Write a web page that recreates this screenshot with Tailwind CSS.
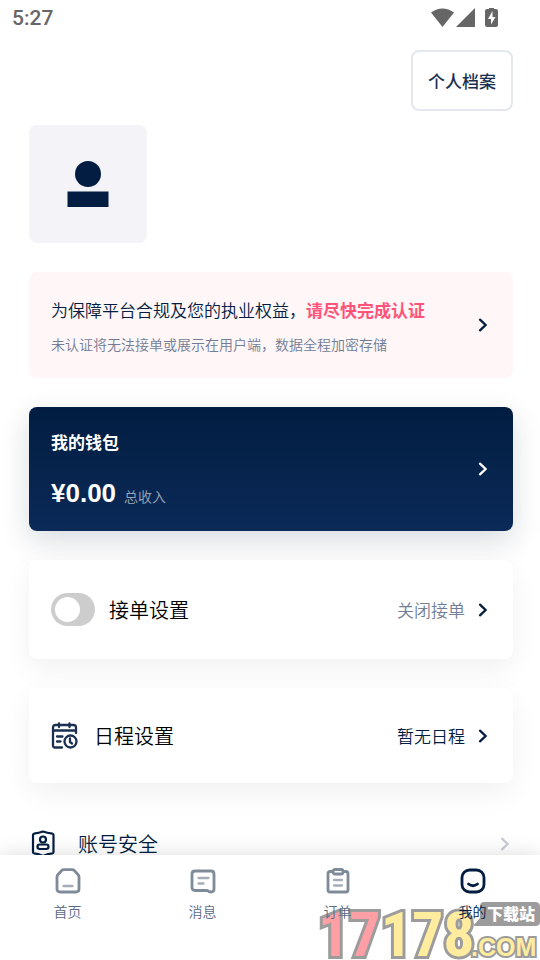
<!DOCTYPE html>
<html lang="zh-CN">
<head>
<meta charset="utf-8">
<meta name="viewport" content="width=device-width, initial-scale=1">
<title>我的</title>
<script src="https://cdn.jsdelivr.net/npm/@tailwindcss/browser@4"></script>
</head>
<body class="flex h-screen flex-col overflow-hidden bg-white font-['Noto_Sans_CJK_SC',sans-serif] font-[350] text-[#021d41]">
  <svg class="hidden" aria-hidden="true">
    <symbol id="chevron" viewBox="0 0 16 16"><path d="M5 2.700 10.600 8 5 13.300" fill="none" stroke="currentColor" stroke-width="2.300" stroke-linecap="round" stroke-linejoin="miter"/></symbol>
  </svg>

  <header class="flex h-9 shrink-0 items-center justify-between pr-[41px] pl-3 text-[#666]">
    <span class="font-[Roboto,sans-serif] text-[21px] leading-9 font-medium">5:27</span>
    <svg class="h-5 w-[68px]" viewBox="0 0 68 20" fill="currentColor" aria-label="WLAN、信号、充电中">
      <path d="M0 4.500Q11.500-3.500 23 4.500L11.500 19Z"/>
      <path d="M44 0V19H25Z"/>
      <path d="M58-1h5v2h2q2 0 2 2v14q0 2-2 2h-9q-2 0-2-2V3q0-2 2-2h2Z"/>
      <path d="M61.500 3 57 11h3v5.500L64.500 9h-3Z" fill="#fff"/>
    </svg>
  </header>

  <main class="min-h-0 flex-1 overflow-hidden pt-[14px] pr-[27px] pl-[29px]">
    <div class="flex justify-end">
      <button class="rounded-lg border-2 border-[#e4e7ed] px-[15px] py-[15px] text-[17px] leading-[27px] font-medium text-[#1a3050]">个人档案</button>
    </div>

    <div class="mt-[14px] flex size-[118px] items-center justify-center rounded-lg bg-[#f3f3f8]">
      <svg class="h-[46px] w-[42px]" viewBox="0 0 42 46" fill="#021d41" role="img" aria-label="头像"><circle cx="21" cy="13" r="13"/><path d="M.5 30.500h41V46H.5Z"/></svg>
    </div>

    <a href="#verify" class="mt-[29px] flex items-center justify-between rounded-lg bg-[#fff6f7] px-[22px] py-6">
      <span>
        <span class="block text-[17px] leading-7">为保障平台合规及您的执业权益，<strong class="font-bold text-[#ff5479]">请尽快完成认证</strong></span>
        <span class="mt-[10px] block text-sm text-[#717d95]">未认证将无法接单或展示在用户端，数据全程加密存储</span>
      </span>
      <svg class="size-4"><use href="#chevron"/></svg>
    </a>

    <a href="#wallet" class="mt-[29px] flex items-center justify-between rounded-lg bg-linear-to-b from-[#021d41] to-[#0c2a58] px-[22px] py-[22px] text-white shadow-[0_10px_30px_rgba(2,29,65,0.16)]">
      <span>
        <span class="block text-[17px] leading-[26px] font-bold">我的钱包</span>
        <span class="mt-[22px] flex items-baseline gap-2">
          <strong class="font-['Liberation_Sans','Noto_Sans_CJK_SC',sans-serif] text-[26px] leading-8 font-bold">¥0.00</strong>
          <span class="text-sm leading-4 text-white/60">总收入</span>
        </span>
      </span>
      <svg class="size-4"><use href="#chevron"/></svg>
    </a>

    <section class="mt-[29px] flex items-center justify-between rounded-lg bg-white px-[22px] py-[33px] shadow-[0_10px_30px_rgba(0,0,0,0.06)]">
      <label class="flex items-center gap-[14px] text-xl leading-[33px] text-black">
        <input type="checkbox" class="relative h-[33px] w-[44px] appearance-none rounded-full bg-[#cdcdcd] before:absolute before:top-1 before:left-1 before:size-[25px] before:rounded-full before:bg-white">
        接单设置
      </label>
      <a href="#orders-setting" class="flex items-center gap-[10px] text-[17px] leading-[29px] text-[#717d95]">关闭接单<svg class="size-4 text-[#021d41]"><use href="#chevron"/></svg></a>
    </section>

    <a href="#schedule" class="mt-[29px] flex items-center justify-between rounded-lg bg-white px-[22px] py-[33px] shadow-[0_10px_30px_rgba(0,0,0,0.06)]">
      <span class="flex items-center gap-4 text-xl leading-[29px] text-black">
        <svg class="size-[27px]" viewBox="0 0 27 27" fill="none" stroke="#1a3050" stroke-width="2.300" stroke-linecap="round" stroke-linejoin="round">
          <path d="M11 25.500H4Q2 25.500 2 23.500V5.500Q2 3 4.500 3H22.500Q25 3 25 5.500V11M2 8.500H25M8 1.500V5M18.500 1.500V5M6 14.500H11.500M6 19.500H9.500"/>
          <circle cx="19.500" cy="19.500" r="6"/><path d="M19 16.500V20L21 21.500"/>
        </svg>
        日程设置
      </span>
      <span class="flex items-center gap-[10px] text-[17px] leading-[29px]">暂无日程<svg class="size-4"><use href="#chevron"/></svg></span>
    </a>

    <a href="#security" class="mt-[46px] flex items-center justify-between">
      <span class="flex items-center gap-[21px] text-xl leading-[29px]">
        <svg class="h-[27px] w-7" viewBox="0 0 28 27" fill="none" stroke="#021d41" stroke-width="2.200" stroke-linejoin="round">
          <path d="M4 5Q4 4 5 3.700Q10 3 14 1.500Q18 3 23.500 3.700Q24.500 4 24.500 5V22Q24.500 23 23.500 23.300Q18 24 14 26Q10 24 5 23.300Q4 23 4 22Z"/>
          <circle cx="14" cy="9.500" r="3"/><rect x="8.500" y="14.500" width="11" height="4.500" rx="2.200"/>
        </svg>
        账号安全
      </span>
      <svg class="size-4 text-[#c9ccd6]"><use href="#chevron"/></svg>
    </a>
  </main>

  <nav class="relative shrink-0 bg-white pb-[38px] shadow-[0_0_20px_rgba(0,0,0,0.14)]">
    <svg class="absolute right-0 bottom-0 h-[60px] w-[224px]" viewBox="0 0 224 60" role="img" aria-label="17178.com 下载站">
      <path d="M168 2H219Q224 2 224 7V22Q224 26 219 26H157L164 18V7Q164 2 168 2Z" fill="#9c9c9c"/>
      <g stroke="#9c9c9c" stroke-width="6" paint-order="stroke" stroke-linejoin="miter">
        <text x="2" y="56" class="font-['Roboto_Condensed','Liberation_Mono',monospace] text-[62px] font-bold" fill="#fe9fa6">17<tspan fill="#ffec9f">178</tspan></text>
        <text x="155" y="56" class="font-['Liberation_Sans',sans-serif] text-[25px] font-bold" fill="#ffec9f" stroke-width="4">.COM</text>
      </g>
      <text x="171" y="20" class="text-[16px] font-black" fill="#fff">下载站</text>
    </svg>
    <ul class="relative grid grid-cols-4 text-center text-sm text-[#5b6b86]">
      <li><a href="#home" class="flex flex-col items-center gap-[5px] pt-3">
        <svg class="size-7" viewBox="0 0 28 28" fill="none" stroke="#7f8b99" stroke-width="2.800" stroke-linejoin="round"><path d="M10 2.700H18Q19.500 2.700 20.500 3.700L24 7.500Q25 8.500 25 10V22Q25 25 22 25H6Q3 25 3 22V10Q3 8.500 4 7.500L7.500 3.700Q8.500 2.700 10 2.700Z"/><path d="M9.500 19H18.500" stroke="#a5aeb8" stroke-width="2.300" stroke-linecap="round"/></svg>
        <span class="leading-[22px]">首页</span></a></li>
      <li><a href="#messages" class="flex flex-col items-center gap-[5px] pt-3">
        <svg class="size-7" viewBox="0 0 28 28" fill="none" stroke="#7f8b99" stroke-width="2.800" stroke-linejoin="round"><path d="M6 4H22Q25 4 25 7V22Q25 25 22 25Q20 25 18.500 23.500H6Q3 23.500 3 20.500V7Q3 4 6 4Z"/><path d="M9.500 11H19.500M9.500 16.500H14.500" stroke="#a5aeb8" stroke-width="2.300" stroke-linecap="round"/></svg>
        <span class="leading-[22px]">消息</span></a></li>
      <li><a href="#orders" class="flex flex-col items-center gap-[5px] pt-3">
        <svg class="size-7" viewBox="0 0 28 28" fill="none" stroke="#7f8b99" stroke-width="2.800" stroke-linejoin="round"><path d="M9 4.500H6Q4 4.500 4 6.500V23Q4 25 6 25H22Q24 25 24 23V6.500Q24 4.500 22 4.500H19"/><rect x="9" y="2.500" width="10" height="4.500" rx="2"/><path d="M10 13H18M10 18.500H18" stroke="#a5aeb8" stroke-width="2.300" stroke-linecap="round"/></svg>
        <span class="leading-[22px]">订单</span></a></li>
      <li><a href="#mine" aria-current="page" class="flex flex-col items-center gap-[5px] pt-3 text-[#021d41]">
        <svg class="size-7" viewBox="0 0 28 28" fill="none" stroke="#021d41" stroke-width="2.800" stroke-linecap="round"><rect x="3" y="3" width="22" height="22" rx="7.500"/><path d="M9.500 17Q14 20.500 18.500 17"/></svg>
        <span class="leading-[22px]">我的</span></a></li>
    </ul>
  </nav>
</body>
</html>
